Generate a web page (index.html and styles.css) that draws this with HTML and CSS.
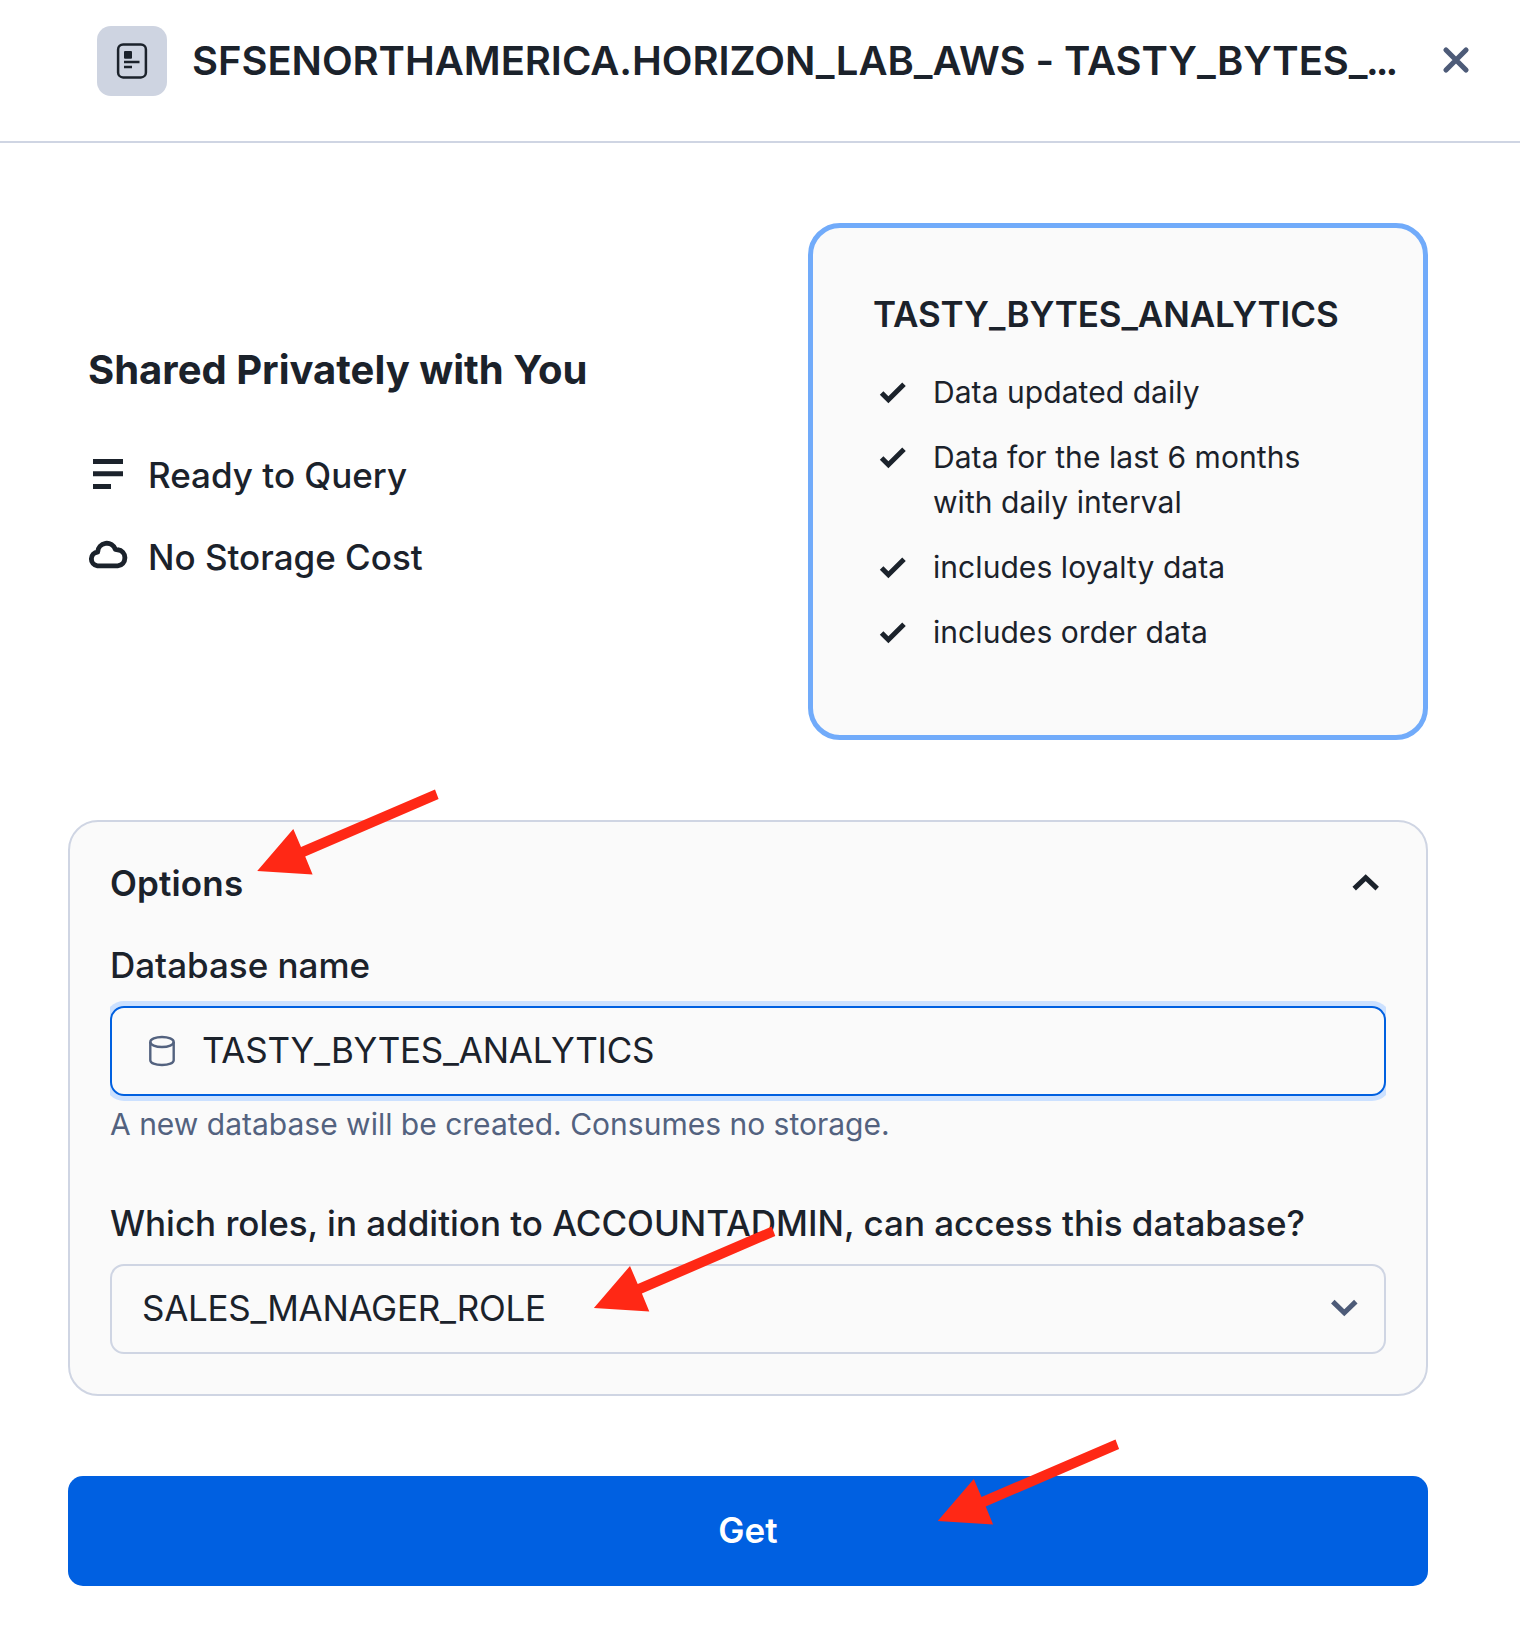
FILE: index.html
```html
<!DOCTYPE html>
<html lang="en">
<head>
<meta charset="utf-8">
<title>Get data</title>
<link rel="stylesheet" href="styles.css">
</head>
<body>
<header class="header">
  <span class="listing-icon">
    <svg width="70" height="70" viewBox="0 0 70 70" fill="none"><rect x="21.1" y="18.4" width="27.8" height="33" rx="5" stroke="#1b222b" stroke-width="2.5"/><rect x="27" y="25" width="8" height="7.7" rx="1" fill="#1b222b"/><path d="M27 36h15.5M27 41h8" stroke="#1b222b" stroke-width="2.3"/></svg>
  </span>
  <h1 class="title">SFSENORTHAMERICA.HORIZON_LAB_AWS - TASTY_BYTES_<span class="dots">...</span></h1>
  <svg class="close" width="30" height="30" viewBox="0 0 30 30" fill="none"><path d="M5 5 25 25M25 5 5 25" stroke="#4d5b78" stroke-width="5.2" stroke-linecap="round"/></svg>
</header>
<main class="content">
  <section class="overview">
    <div class="summary">
      <h2 class="summary-title">Shared Privately with You</h2>
      <div class="feature"><svg width="40" height="40" viewBox="0 0 40 40"><path d="M5 5h30v5H5zM5 17.2h30v5H5zM5 30h18v5H5z" fill="#1b222b"/></svg><span>Ready to Query</span></div>
      <div class="feature"><svg width="40" height="40" viewBox="0 0 40 40" fill="none"><path d="M9.4 29.9H29.7A8.1 8.1 0 0 0 29.7 13.8L27.4 13.4A9.1 9.1 0 0 0 9.7 16A7 7 0 0 0 9.4 29.9Z" stroke="#1b222b" stroke-width="4.9" stroke-linejoin="round"/></svg><span>No Storage Cost</span></div>
    </div>
    <article class="card">
      <h3 class="card-title">TASTY_BYTES_ANALYTICS</h3>
      <ul class="checks">
        <li><svg width="30" height="45" viewBox="0 0 30 45" fill="none"><path d="M2.6 22.9 9.4 29.8 25 14.2" stroke="#1b222b" stroke-width="5"/></svg><span>Data updated daily</span></li>
        <li><svg width="30" height="45" viewBox="0 0 30 45" fill="none"><path d="M2.6 22.9 9.4 29.8 25 14.2" stroke="#1b222b" stroke-width="5"/></svg><span>Data for the last 6 months<br>with daily interval</span></li>
        <li><svg width="30" height="45" viewBox="0 0 30 45" fill="none"><path d="M2.6 22.9 9.4 29.8 25 14.2" stroke="#1b222b" stroke-width="5"/></svg><span>includes loyalty data</span></li>
        <li><svg width="30" height="45" viewBox="0 0 30 45" fill="none"><path d="M2.6 22.9 9.4 29.8 25 14.2" stroke="#1b222b" stroke-width="5"/></svg><span>includes order data</span></li>
      </ul>
    </article>
  </section>
  <section class="options">
    <div class="options-head"><h3 class="options-title">Options</h3><svg width="28" height="18" viewBox="0 0 28 18" fill="none"><path d="M2.2 14.6 13.7 3.6 25.2 14.6" stroke="#1b222b" stroke-width="5"/></svg></div>
    <div class="label">Database name</div>
    <div class="field-clip"><div class="field field-focus">
      <svg width="28" height="32" viewBox="0 0 28 32" fill="none" stroke="#53627f" stroke-width="2.4"><ellipse cx="14" cy="7" rx="11.7" ry="5"/><path d="M2.3 7v18.2c0 2.8 4.8 4.8 11.7 4.8s11.7-2 11.7-4.8V7"/></svg><span>TASTY_BYTES_ANALYTICS</span>
    </div></div>
    <p class="hint">A new database will be created. Consumes no storage.</p>
    <div class="label roles-label">Which roles, in addition to ACCOUNTADMIN, can access this database?</div>
    <div class="field field-select"><span>SALES_MANAGER_ROLE</span><svg width="28" height="18" viewBox="0 0 28 18" fill="none"><path d="M2.8 2.6 14.3 13.8 25.8 2.6" stroke="#4d5b78" stroke-width="5"/></svg></div>
  </section>
  <button class="get" type="button">Get</button>
</main>
<svg class="arrows" width="1520" height="1636" viewBox="0 0 1520 1636">
  <defs><path id="arrow" d="M257.2 871 293.3 829 301 847 435 789.5 438.6 799 305.2 856.5 312.6 874.6Z" fill="#ff2815"/></defs>
  <use href="#arrow"/><use href="#arrow" x="336.7" y="437"/><use href="#arrow" x="680.5" y="650"/>
</svg>
</body>
</html>
```
FILE: styles.css
```css
* { box-sizing: border-box; }
body { margin: 0; width: 1520px; height: 1636px; background: #fff; color: #1b222b; font-family: Inter, "Liberation Sans", sans-serif; position: relative; overflow: hidden; }
h1, h2, h3, p, ul { margin: 0; padding: 0; }
svg { display: block; flex: none; }
.header { height: 143px; padding: 26px 49px 0 97px; border-bottom: 2px solid #cfd5e3; display: flex; align-items: flex-start; }
.listing-icon { width: 70px; height: 70px; border-radius: 14px; background: #ced4e1; flex: none; }
.title { margin-left: 25px; font-size: 40px; line-height: 70px; font-weight: 600; letter-spacing: -0.05px; white-space: nowrap; flex: 1; }
.dots { letter-spacing: -3px; margin-left: -1.5px; }
.close { margin-top: 19px; }
.content { padding: 80px 92px 0 68px; }
.overview { display: flex; justify-content: space-between; height: 517px; }
.summary { padding: 123px 0 0 20px; }
.summary-title { font-size: 40px; line-height: 48px; font-weight: 700; margin-bottom: 60px; white-space: nowrap; }
.feature { display: flex; font-size: 35px; line-height: 42px; font-weight: 500; gap: 20px; height: 42px; margin-bottom: 40px; white-space: nowrap; }
.card { width: 620px; height: 517px; border: 5px solid #71abfa; border-radius: 32px; background: #fafafa; padding: 63px 60px; }
.card-title { font-size: 35px; line-height: 46px; font-weight: 600; letter-spacing: -0.1px; white-space: nowrap; }
.checks { list-style: none; margin: 33px 0 0 6px; display: grid; gap: 20px; font-size: 30px; line-height: 45px; letter-spacing: 0.06px; }
.checks li { display: flex; gap: 24px; white-space: nowrap; }
.options { margin-top: 80px; height: 576px; border: 2px solid #cfd5e3; border-radius: 30px; background: #fafafa; padding: 39px 40px; }
.options-head { display: flex; justify-content: space-between; align-items: center; padding-right: 6px; height: 44px; }
.options-title { font-size: 35px; font-weight: 600; line-height: 44px; letter-spacing: 0.15px; }
.label { margin-top: 38px; font-size: 35px; font-weight: 500; line-height: 44px; letter-spacing: -0.02px; white-space: nowrap; }
.field-clip { overflow: hidden; padding: 5px 0; margin-top: 14px; }
.field { height: 90px; border: 2px solid #cfd5e3; border-radius: 14px; display: flex; align-items: center; font-size: 35px; padding: 0 30px; }
.field span { padding-bottom: 2px; }
.field-focus { border-color: #0060e0; box-shadow: 0 0 0 5px #cce1ff; padding-left: 36px; gap: 26px; letter-spacing: -0.25px; }
.field-select { justify-content: space-between; margin-top: 19px; padding-right: 26px; letter-spacing: -0.3px; }
.field-select svg { margin-top: -2px; }
.hint { margin-top: 2px; color: #53627f; font-size: 30px; line-height: 42px; white-space: nowrap; }
.roles-label { margin-top: 56px; }
.get { display: block; width: 100%; height: 110px; margin-top: 80px; border: 0; border-radius: 15px; background: #0060e1; color: #fff; font: 600 35px/108px Inter, "Liberation Sans", sans-serif; padding: 0 0 2px; }
.arrows { position: absolute; left: 0; top: 0; pointer-events: none; }
```
